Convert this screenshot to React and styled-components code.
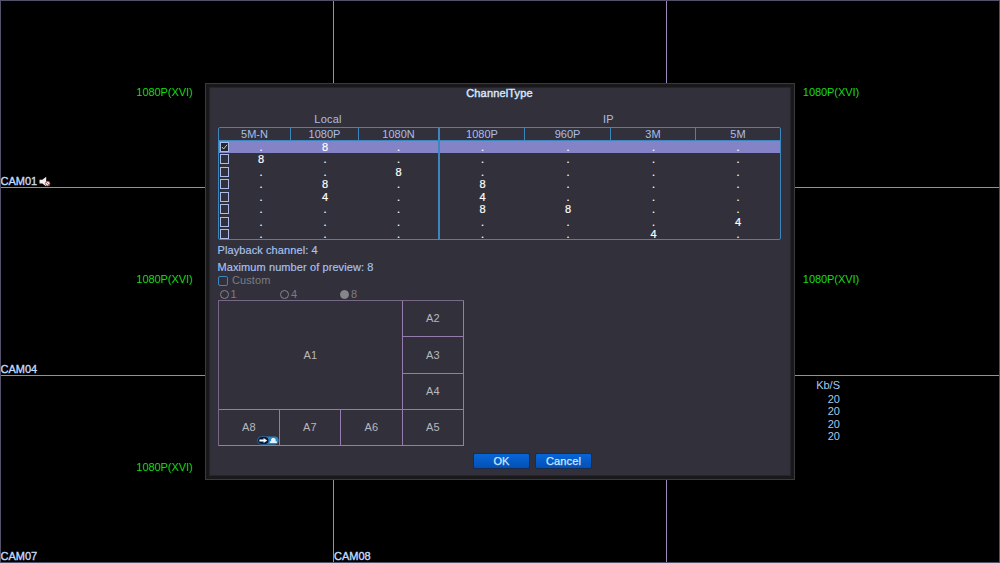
import React from 'react'
import styled, { createGlobalStyle, css } from 'styled-components'

const GlobalStyle = createGlobalStyle`
  * {
    box-sizing: border-box;
  }
  body {
    margin: 0;
    background: #000;
    font-family: 'Liberation Sans', Arial, sans-serif;
    font-size: 11px;
    line-height: 13px;
  }
`

const Screen = styled.div`
  position: relative;
  width: 1000px;
  height: 563px;
  display: grid;
  grid-template-columns: 333px 333px 332px;
  grid-template-rows: 187px 188px 186px;
  border: 1px solid #54506a;
  background: #000;
  overflow: hidden;
`

const Camera = styled.div`
  display: flex;
  flex-direction: column;
  border-right: ${props => (props.$lastCol ? 0 : 1)}px solid #a084bc;
  border-bottom: ${props => (props.$lastRow ? 0 : 1)}px solid #a084bc;
`

const Signal = styled.div`
  margin-top: ${props => props.$top}px;
  padding-right: ${props => (props.$lastCol ? 4 : 5)}px;
  text-align: center;
  letter-spacing: -0.06px;
  color: #16dc16;
`

const CameraName = styled.div`
  display: flex;
  align-items: center;
  gap: 2px;
  margin-top: auto;
  margin-bottom: -1px;
  margin-left: ${props => (props.$firstCol ? -0.5 : 0)}px;
  color: #c4dcfc;
  -webkit-text-stroke: 0.35px #c4dcfc;
`

const Bitrate = styled.div`
  display: flex;
  flex-direction: column;
  width: 173px;
  padding-top: 3px;
  text-align: right;
  line-height: 12.6px;
  color: #a9c8ee;
`

const Unit = styled.span`
  margin-bottom: 1px;
`

const Dialog = styled.div`
  position: absolute;
  left: 204px;
  top: 82px;
  width: 590px;
  height: 397px;
  display: flex;
  flex-direction: column;
  padding: 0 9px 0 8px;
  background: #32313b;
  border: 1px solid #3a3a3a;
  box-shadow: inset 0 0 0 3px #19191b, inset 0 0 0 4px #242429;
`

const Title = styled.div`
  margin-top: 3px;
  text-align: center;
  letter-spacing: 0.15px;
  color: #d8e8ff;
  -webkit-text-stroke: 0.4px #d8e8ff;
`

const Groups = styled.div`
  display: grid;
  grid-template-columns: 220px 341px;
  margin: 13px 0 1px 4px;
  text-align: center;
  letter-spacing: 0.2px;
  color: #a9bfe8;
`

const Table = styled.div`
  width: 563px;
  height: 113px;
  margin-left: 4px;
  display: flex;
  flex-direction: column;
  border: 1px solid #3c86bd;
  border-radius: 2px;
  overflow: hidden;
`

const columns = css`
  display: grid;
  grid-template-columns: 72px 68px 81px 85px 86px 85px 84px;
`

const HeadRow = styled.div`
  ${columns}
  flex: none;
  height: 12.5px;
  border-bottom: 1px solid #3c86bd;
  color: #a9bfe8;
`

const HeadCell = styled.div`
  border-right: ${props => (props.$wide ? 2 : props.$last ? 0 : 1)}px solid #3c86bd;
  text-align: center;
  line-height: 12px;
`

const Row = styled.div`
  ${columns}
  flex: none;
  height: 12.5px;
  background: ${props => (props.$active ? '#8583c7' : 'transparent')};
  color: #fff;
  -webkit-text-stroke: 0.2px #fff;
`

const Cell = styled.div`
  display: flex;
  align-items: center;
  border-right: ${props => (props.$wide ? 2 : 0)}px solid #3c86bd;
`

const Value = styled.span`
  flex: 1;
  padding-left: ${props => (props.$first ? 2 : 0)}px;
  text-align: center;
  line-height: 12.5px;
`

const Check = styled.span`
  display: flex;
  width: 9px;
  height: 10px;
  margin-left: 1px;
  border: 1px solid #a9bde6;
  background: ${props => (props.$on ? '#26252c' : 'transparent')};
`

const Info = styled.div`
  margin: 4px 0 0 3.5px;
  letter-spacing: 0.09px;
  color: #a9c3f0;
  -webkit-text-stroke: 0.15px #a9c3f0;
`

const Custom = styled.div`
  display: flex;
  align-items: center;
  gap: 4px;
  margin-left: 4px;
  letter-spacing: 0.1px;
  color: #7c7c82;
`

const CustomBox = styled.span`
  width: 10px;
  height: 10px;
  border: 1px solid #3c86bd;
  border-radius: 2px;
`

const Radios = styled.div`
  display: grid;
  grid-template-columns: 60.5px 60px 60px;
  margin: 1px 0 -1px 5.5px;
  color: #7c7c82;
`

const Radio = styled.div`
  display: flex;
  align-items: center;
  gap: 2px;
`

const Dot = styled.span`
  width: 9px;
  height: 9px;
  border: 1px solid #85858a;
  border-radius: 50%;
  background: ${props => (props.$on ? '#85858a' : 'transparent')};
`

const Preview = styled.div`
  display: grid;
  grid-template-columns: 61px 61px 62px 61px;
  grid-template-rows: 36px 37px 36px 36px;
  width: 246px;
  margin-left: 4px;
  border: solid #786888;
  border-width: 1px 0 0 1px;
`

const Tile = styled.div`
  position: relative;
  display: flex;
  align-items: center;
  justify-content: center;
  grid-area: ${props => props.$area};
  border: solid #967cae;
  border-width: 0 1px 1px 0;
  letter-spacing: 0.3px;
  color: #b8b8bc;
`

const TileBadge = styled.span`
  position: absolute;
  right: 0;
  bottom: 0;
  display: flex;
`

const Buttons = styled.div`
  display: flex;
  gap: 5px;
  margin: 7px 0 0 259px;
`

const Button = styled.button`
  width: 57px;
  height: 16px;
  padding: 0;
  border: 1px solid #182c50;
  border-radius: 2px;
  background: linear-gradient(#0766d8, #0450b4);
  color: #d4e6ff;
  font: inherit;
  letter-spacing: 0.15px;
  line-height: 14px;
  -webkit-text-stroke: 0.25px #d4e6ff;
`

const cameras = [
  { name: 'CAM01', signal: 85, muted: true },
  {},
  { signal: 85 },
  { name: 'CAM04', signal: 85 },
  {},
  { signal: 85 },
  { name: 'CAM07', signal: 85 },
  { name: 'CAM08' },
  { bitrate: [20, 20, 20, 20] }
]

const heads = ['5M-N', '1080P', '1080N', '1080P', '960P', '3M', '5M']

const rows = [
  '.8.....',
  '8......',
  '..8....',
  '.8.8...',
  '.4.4...',
  '...88..',
  '......4',
  '.....4.'
]

const tiles = [
  ['A1', '1 / 1 / 4 / 4'],
  ['A2', '1 / 4'],
  ['A3', '2 / 4'],
  ['A4', '3 / 4'],
  ['A5', '4 / 4'],
  ['A6', '4 / 3'],
  ['A7', '4 / 2'],
  ['A8', '4 / 1']
]

const MutedIcon = () => (
  <svg width='12' height='11' viewBox='0 0 12 11'>
    <path d='M.5 3.8h2.9L7.2.8v9.8L3.4 7.4H.5z' fill='#f4f0ee' />
    <circle cx='8.6' cy='7.6' r='2.3' fill='#f0dcdc' stroke='#b44850' strokeWidth='.8' />
    <path d='M7.2 6.2l2.8 2.8' stroke='#b44850' strokeWidth='.8' />
  </svg>
)

const LinkIcon = () => (
  <svg width='22' height='9' viewBox='0 0 22 9'>
    <rect x='.5' y='.5' width='21' height='8' rx='4' fill='#2a86c8' />
    <rect x='1' y='1' width='10.5' height='7' rx='3.5' fill='#061a3c' />
    <path d='M2.4 3.4h4.2V2l3.6 2.5L6.6 7V5.6H2.4z' fill='#fff' />
    <path d='M12.8 7V5.2h1.3V3.2L15.2 2h2l1.4 1.2v2h1.2V7z' fill='#e4f4ff' />
  </svg>
)

function ChannelTable () {
  return (
    <Table>
      <HeadRow>
        {heads.map((head, i) => (
          <HeadCell key={i} $wide={i === 2} $last={i === 6}>{head}</HeadCell>
        ))}
      </HeadRow>
      {rows.map((row, r) => (
        <Row key={r} $active={r === 0}>
          {row.split('').map((value, i) => (
            <Cell key={i} $wide={i === 2}>
              {i === 0 && (
                <Check $on={r === 0}>
                  {r === 0 && (
                    <svg width='7' height='8' viewBox='0 0 7 8'>
                      <path d='M1 4l1.6 2L6 1.8' fill='none' stroke='#c8c8c8' />
                    </svg>
                  )}
                </Check>
              )}
              <Value $first={i === 0}>{value}</Value>
            </Cell>
          ))}
        </Row>
      ))}
    </Table>
  )
}

function ChannelTypeDialog () {
  return (
    <Dialog>
      <Title>ChannelType</Title>
      <Groups>
        <span>Local</span>
        <span>IP</span>
      </Groups>
      <ChannelTable />
      <Info>Playback channel: 4</Info>
      <Info>Maximum number of preview: 8</Info>
      <Custom>
        <CustomBox />
        Custom
      </Custom>
      <Radios>
        {[1, 4, 8].map(count => (
          <Radio key={count}>
            <Dot $on={count === 8} />
            {count}
          </Radio>
        ))}
      </Radios>
      <Preview>
        {tiles.map(([name, area]) => (
          <Tile key={name} $area={area}>
            {name}
            {name === 'A8' && <TileBadge><LinkIcon /></TileBadge>}
          </Tile>
        ))}
      </Preview>
      <Buttons>
        <Button>OK</Button>
        <Button>Cancel</Button>
      </Buttons>
    </Dialog>
  )
}

function App () {
  return (
    <React.Fragment>
      <GlobalStyle />
      <Screen>
        {cameras.map((camera, i) => (
          <Camera key={i} $lastCol={i % 3 === 2} $lastRow={i > 5}>
            {camera.signal && <Signal $top={camera.signal} $lastCol={i % 3 === 2}>1080P(XVI)</Signal>}
            {camera.bitrate && (
              <Bitrate>
                <Unit>Kb/S</Unit>
                {camera.bitrate.map((rate, n) => <span key={n}>{rate}</span>)}
              </Bitrate>
            )}
            {camera.name && (
              <CameraName $firstCol={i % 3 === 0}>
                {camera.name}
                {camera.muted && <MutedIcon />}
              </CameraName>
            )}
          </Camera>
        ))}
        <ChannelTypeDialog />
      </Screen>
    </React.Fragment>
  )
}

export default App
